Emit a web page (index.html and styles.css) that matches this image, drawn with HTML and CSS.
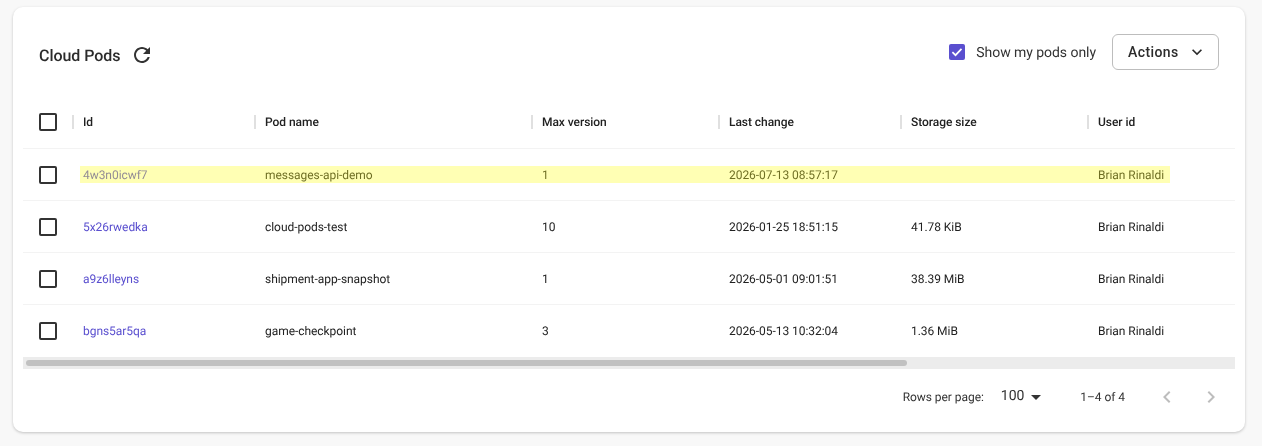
FILE: index.html
```html
<!DOCTYPE html>
<html lang="en">
  <head>
    <meta charset="UTF-8" />
    <title>Cloud Pods</title>
    <link rel="stylesheet" href="styles.css">
  </head>
  <body>
    <div class="card">
      <div class="card-header">
        <div class="title-group">
          <h2 class="title">Cloud Pods</h2>
          <svg class="refresh" viewBox="0 0 24 24"><path d="M17.65 6.35C16.2 4.9 14.21 4 12 4c-4.42 0-7.99 3.58-7.99 8s3.57 8 7.99 8c3.73 0 6.84-2.55 7.73-6h-2.08c-.82 2.33-3.04 4-5.65 4-3.31 0-6-2.69-6-6s2.69-6 6-6c1.66 0 3.14.69 4.22 1.78L13 11h7V4l-2.35 2.35z"/></svg>
        </div>
        <div class="header-actions">
          <label class="my-pods">
            <span class="check-on">
              <svg viewBox="0 0 16 16"><path d="M3.4 8.2l3.1 3 6-6.4" fill="none" stroke="#fff" stroke-width="1.7"/></svg>
            </span>
            <span class="my-pods-text">Show my pods only</span>
          </label>
          <button class="actions-btn">
            Actions
            <svg viewBox="0 0 24 24"><path d="M7.41 8.59 12 13.17l4.59-4.58L18 10l-6 6-6-6z"/></svg>
          </button>
        </div>
      </div>

      <div class="table-wrap">
        <table class="pods">
          <colgroup>
            <col class="col-check" />
            <col class="col-id" />
            <col class="col-name" />
            <col class="col-version" />
            <col class="col-change" />
            <col class="col-size" />
            <col class="col-user" />
            <col class="col-rest" />
          </colgroup>
          <thead>
            <tr>
              <th class="cell-check"><span class="box"></span></th>
              <th><span class="head-label">Id</span></th>
              <th><span class="head-label">Pod name</span></th>
              <th><span class="head-label">Max version</span></th>
              <th><span class="head-label">Last change</span></th>
              <th><span class="head-label">Storage size</span></th>
              <th><span class="head-label">User id</span></th>
              <th></th>
            </tr>
          </thead>
          <tbody>
            <tr class="row-new">
              <td class="cell-check"><span class="box"></span></td>
              <td><a href="#">4w3n0icwf7</a></td>
              <td>messages-api-demo</td>
              <td>1</td>
              <td>2026-07-13 08:57:17</td>
              <td></td>
              <td>Brian Rinaldi</td>
              <td></td>
            </tr>
            <tr>
              <td class="cell-check"><span class="box"></span></td>
              <td><a href="#">5x26rwedka</a></td>
              <td>cloud-pods-test</td>
              <td>10</td>
              <td>2026-01-25 18:51:15</td>
              <td>41.78 KiB</td>
              <td>Brian Rinaldi</td>
              <td></td>
            </tr>
            <tr>
              <td class="cell-check"><span class="box"></span></td>
              <td><a href="#">a9z6lleyns</a></td>
              <td>shipment-app-snapshot</td>
              <td>1</td>
              <td>2026-05-01 09:01:51</td>
              <td>38.39 MiB</td>
              <td>Brian Rinaldi</td>
              <td></td>
            </tr>
            <tr>
              <td class="cell-check"><span class="box"></span></td>
              <td><a href="#">bgns5ar5qa</a></td>
              <td>game-checkpoint</td>
              <td>3</td>
              <td>2026-05-13 10:32:04</td>
              <td>1.36 MiB</td>
              <td>Brian Rinaldi</td>
              <td></td>
            </tr>
          </tbody>
        </table>
      </div>
      <div class="scrollbar"><div class="scrollbar-thumb"></div></div>

      <div class="pager">
        <span class="rows-label">Rows per page:</span>
        <span class="rows-select"><span class="rows-value">100</span> <i class="caret"></i></span>
        <span class="range">1–4 of 4</span>
        <div class="pager-nav">
          <svg viewBox="0 0 24 24"><path d="M15.41 7.41 14 6l-6 6 6 6 1.41-1.41L10.83 12z"/></svg>
          <svg viewBox="0 0 24 24"><path d="M10 6 8.59 7.41 13.17 12l-4.58 4.59L10 18l6-6z"/></svg>
        </div>
      </div>
    </div>
  </body>
</html>
```

FILE: styles.css
```css
* {
  box-sizing: border-box;
}
html,
body {
  height: 100%;
}
body {
  margin: 0;
  padding: 7px 17px 14px 13px;
  background-color: #f8f8f8;
  font-family: Roboto, Arial, sans-serif;
  font-size: 12px;
  letter-spacing: -0.05px;
  color: #212121;
  text-rendering: geometricPrecision;
  overflow: hidden;
}
.card {
  height: 425px;
  padding: 0 10px;
  background-color: white;
  border-radius: 10px;
  box-shadow: 0 1px 3px rgba(0, 0, 0, 0.22);
  will-change: transform;
}

/* header */
.card-header {
  display: flex;
  align-items: center;
  justify-content: space-between;
  height: 88px;
  padding: 2px 16px 0 16px;
}
.title-group {
  display: flex;
  align-items: center;
  gap: 9.5px;
  margin-top: 6px;
}
.title {
  margin: 0;
  font-size: 16px;
  font-weight: 500;
  color: #2b2b2b;
}
.refresh {
  width: 24px;
  height: 24px;
  fill: #333;
}
.header-actions {
  display: flex;
  align-items: center;
  gap: 16px;
}
.my-pods {
  display: flex;
  align-items: center;
  gap: 11px;
  font-size: 14px;
  color: #333;
}
.my-pods-text {
  margin-top: 1px;
}
.check-on {
  display: block;
  width: 16px;
  height: 16px;
  background-color: #5a4fcf;
  border-radius: 2px;
}
.check-on svg {
  display: block;
}
.actions-btn {
  display: flex;
  align-items: center;
  justify-content: space-between;
  width: 107px;
  height: 36px;
  padding: 0 11px 0 15px;
  background: white;
  border: 1px solid #bdbdbd;
  border-radius: 6px;
  font-family: inherit;
  font-size: 14px;
  font-weight: 500;
  letter-spacing: 0.4px;
  color: #2b2b2b;
}
.actions-btn svg {
  width: 20px;
  height: 20px;
  fill: #2b2b2b;
}

/* table */
.table-wrap {
  overflow: hidden;
}
.pods {
  width: 1664px;
  table-layout: fixed;
  border-collapse: separate;
  border-spacing: 0;
}
.col-check {
  width: 50px;
}
.col-id {
  width: 182px;
}
.col-name {
  width: 277px;
}
.col-version {
  width: 187px;
}
.col-change {
  width: 182px;
}
.col-size {
  width: 187px;
}
.col-user {
  width: 187px;
}
.pods th {
  height: 54px;
  padding: 0;
  font-weight: 500;
  text-align: left;
  color: #212121;
  border-bottom: 1px solid #f3f3f3;
}
.head-label {
  display: block;
  margin-left: -1px;
  padding-left: 9px;
  line-height: 14px;
  border-left: 2px solid #e0e0e0;
}
.pods td {
  height: 52px;
  padding: 0 0 0 10px;
  border-bottom: 1px solid #f3f3f3;
}
.pods tr:last-child td {
  border-bottom: none;
}
.pods .cell-check {
  padding: 0 0 0 16px;
}
.box {
  display: block;
  width: 18px;
  height: 18px;
  border: 2px solid #333;
  border-radius: 2px;
}
.pods a {
  color: #5a4fcf;
  text-decoration: none;
}

/* highlighted row, sits over the cells */
.row-new td {
  position: relative;
}
.row-new td:not(.cell-check):not(:last-child)::after {
  content: "";
  position: absolute;
  top: 17px;
  left: 0;
  right: 0;
  height: 17px;
  background-color: rgba(255, 255, 41, 0.35);
}
.row-new td:nth-child(2)::after {
  left: 7px !important;
}
.row-new td:nth-child(7)::after {
  right: 105px !important;
}

/* drawn scrollbar */
.scrollbar {
  height: 12px;
  padding: 3px;
  background-color: #ececec;
}
.scrollbar-thumb {
  width: 881px;
  height: 6px;
  background-color: #c1c1c1;
  border-radius: 3px;
}

/* footer */
.pager {
  display: flex;
  align-items: center;
  justify-content: flex-end;
  height: 56px;
  padding: 0 12px 0 0;
}
.rows-label {
  color: #333;
}
.rows-select {
  display: flex;
  align-items: center;
  gap: 7px;
  margin-left: 17px;
  font-size: 14px;
  color: #333;
}
.rows-value {
  margin-top: -3px;
}
.caret {
  display: block;
  width: 0;
  height: 0;
  border-left: 5px solid transparent;
  border-right: 5px solid transparent;
  border-top: 5px solid #333;
}
.range {
  margin-left: 39px;
  color: #333;
}
.pager-nav {
  display: flex;
  gap: 20px;
  margin-left: 30px;
}
.pager-nav svg {
  display: block;
  width: 24px;
  height: 24px;
  fill: #bdbdbd;
}
```
